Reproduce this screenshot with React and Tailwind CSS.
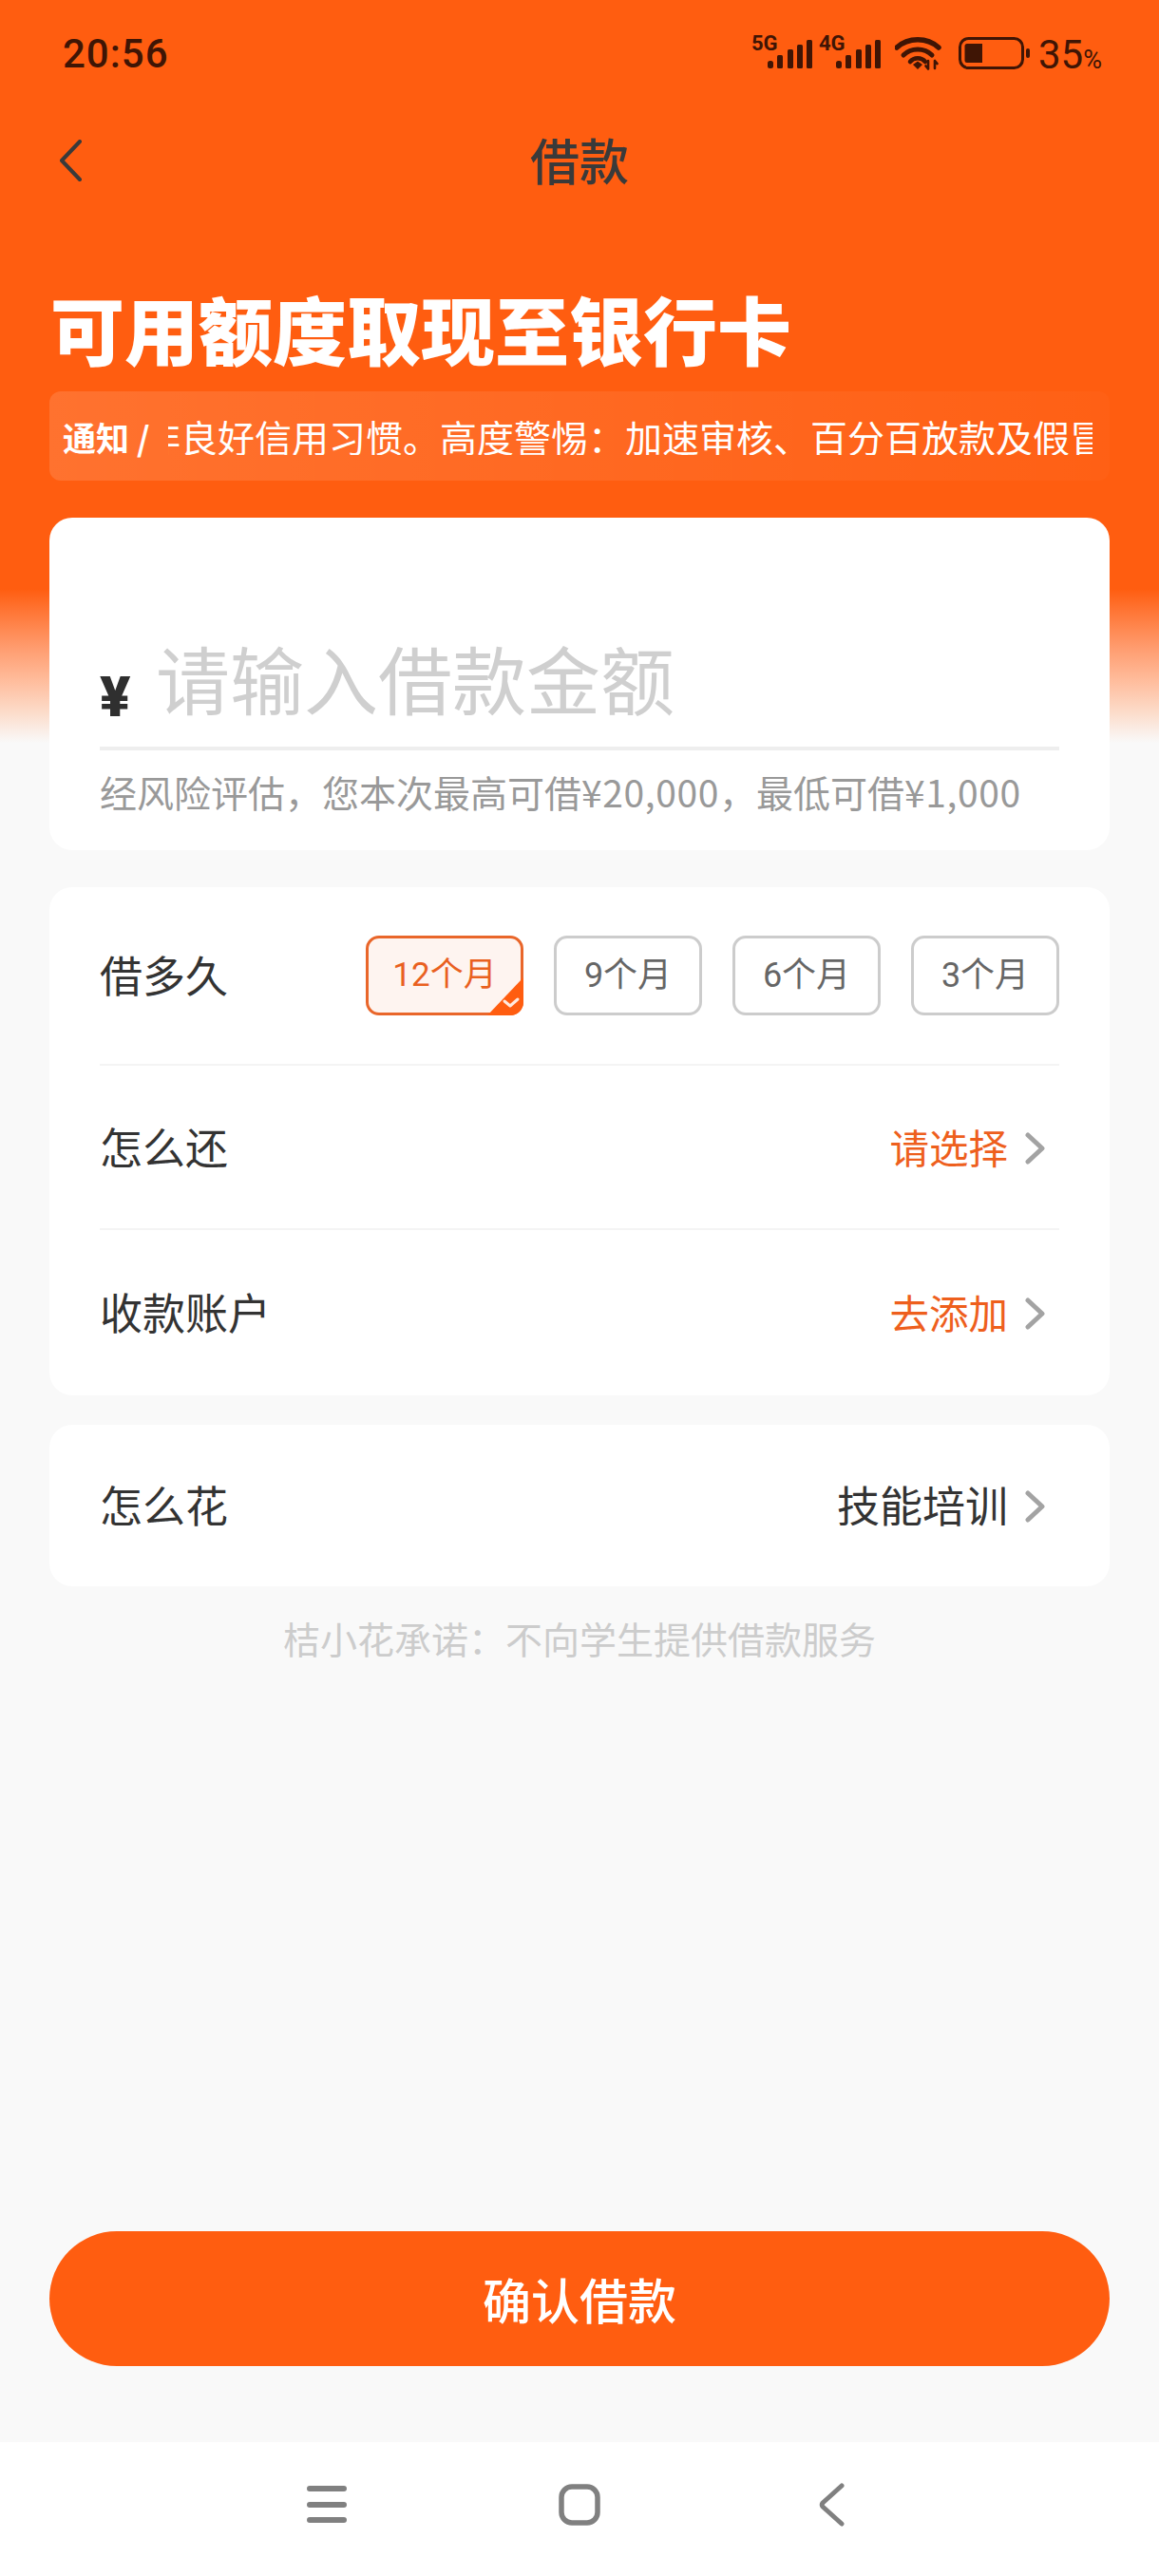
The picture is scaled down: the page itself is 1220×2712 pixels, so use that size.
import React from "react";

const Chevron = () => (
  <svg width="22" height="34" viewBox="0 0 22 34" fill="none" className="shrink-0 mt-[2px]">
    <path d="M3 3 L18 17 L3 31" stroke="#a3a3a3" strokeWidth="5" strokeLinecap="round" strokeLinejoin="round" />
  </svg>
);

const Bars = () => (
  <svg width="48" height="30" viewBox="0 0 48 30" className="block">
    <rect x="0" y="22" width="6" height="8" rx="2.5" fill="#3f1505" />
    <rect x="10" y="16" width="6" height="14" rx="1.5" fill="#3f1505" />
    <rect x="21" y="10" width="6" height="20" rx="1.5" fill="#3f1505" />
    <rect x="31" y="5" width="6" height="25" rx="1.5" fill="#3f1505" />
    <rect x="41" y="0" width="6" height="30" rx="1.5" fill="#3f1505" />
  </svg>
);

const Wifi = () => (
  <svg width="50" height="36" viewBox="0 0 50 36" fill="none" className="block">
    <path d="M2 12 C14 1 34 1 46 12" stroke="#3f1505" strokeWidth="5.5" strokeLinecap="round" />
    <path d="M9 20 C17 12 31 12 39 20" stroke="#3f1505" strokeWidth="5" strokeLinecap="round" />
    <path d="M16 27 C20 22 28 22 32 27" stroke="#3f1505" strokeWidth="4.5" strokeLinecap="round" />
    <path d="M19 30 L24 26.5 L29 30 L24 35 Z" fill="#3f1505" />
    <path d="M35 26 V34 M32.5 31.5 L35 34.5 M42 34 V26 M42 26 L44.5 29" stroke="#3f1505" strokeWidth="2.6" strokeLinecap="round" />
  </svg>
);

const Battery = () => (
  <svg width="76" height="34" viewBox="0 0 76 34" fill="none" className="block">
    <rect x="1.5" y="1.5" width="66" height="31" rx="9" stroke="#3f1505" strokeWidth="3" />
    <path d="M9 7 H25 V27 H9 Q6.5 27 6.5 24.5 V9.5 Q6.5 7 9 7 Z" fill="#3f1505" />
    <rect x="71" y="12" width="4" height="10" rx="2" fill="#3f1505" />
  </svg>
);

const Term = ({ label, active }) => (
  <div
    className={
      active
        ? "relative flex items-center justify-center w-[166px] h-[84px] rounded-[14px] border-[3px] border-[#e9662a] bg-[#fef4f0] text-[#e9601f] text-[35px] font-['Roboto','Noto_Sans_CJK_SC',sans-serif]"
        : "flex items-center justify-center w-[156px] h-[84px] rounded-[14px] border-[3px] border-[#cccccc] bg-white text-[#666666] text-[36px] font-['Roboto','Noto_Sans_CJK_SC',sans-serif]"
    }
  >
    {label}
    {active && (
      <svg width="40" height="40" viewBox="0 0 40 40" className="absolute right-[-3px] bottom-[-3px] rounded-br-[14px]">
        <path d="M40 0 V40 H2 Z" fill="#ff5d10" />
        <path d="M20 25 L26 30 L34 23" fill="none" stroke="#ffe9de" strokeWidth="3" strokeLinecap="round" strokeLinejoin="round" />
      </svg>
    )}
  </div>
);

const Row = ({ label, value, orange, h, line }) => (
  <div className={`${h} flex items-center justify-between ${line ? "border-b-2 border-[#f4f4f4]" : ""}`}>
    <span className="text-[45px] leading-none text-[#333333] mt-[-3px]">{label}</span>
    <span className="flex items-center gap-[18px] pr-[14px]">
      <span className={orange ? "text-[41.5px] leading-none text-[#ee5f1d]" : "text-[45px] leading-none text-[#333333] mt-[-3px]"}>{value}</span>
      <Chevron />
    </span>
  </div>
);

export default function App() {
  return (
    <div className="w-[1220px] h-[2712px] flex flex-col overflow-hidden bg-[#f9f9f9] font-['Noto_Sans_CJK_SC','Noto_Sans',sans-serif] bg-[linear-gradient(180deg,#ff5d10_0px,#ff5d10_620px,#ff7a3c_648px,#ff9a6c_680px,#ffbb9a_715px,#fcdcca_750px,#f9f9f9_782px)]">
      {/* status bar */}
      <div className="h-[112px] shrink-0 flex items-start justify-between pl-[66px] pr-[60px] pt-[33px] text-[#3f1505]">
        <span className="text-[42px] leading-[48px] tracking-[1px] font-medium font-['Roboto',sans-serif]">20:56</span>
        <div className="flex items-start">
          <div className="relative w-[71px] h-[52px]">
            <span className="absolute left-0 top-[3px] text-[22px] leading-[20px] font-bold font-['Roboto',sans-serif]">5G</span>
            <span className="absolute left-[17px] top-[9px]"><Bars /></span>
          </div>
          <div className="relative w-[80px] h-[52px]">
            <span className="absolute left-0 top-[3px] text-[22px] leading-[20px] font-bold font-['Roboto',sans-serif]">4G</span>
            <span className="absolute left-[18px] top-[9px]"><Bars /></span>
          </div>
          <div className="mt-[5px] w-[50px]"><Wifi /></div>
          <div className="mt-[6px] ml-[17px] w-[76px]"><Battery /></div>
          <div className="ml-[8px] mt-[1px] flex items-baseline font-['Roboto',sans-serif]">
            <span className="text-[42px] leading-[48px]">35</span>
            <span className="text-[27px] leading-[48px]">%</span>
          </div>
        </div>
      </div>

      {/* title bar */}
      <div className="h-[114px] shrink-0 flex items-center justify-between pl-[62px] pr-[62px]">
        <svg width="24" height="44" viewBox="0 0 24 44" fill="none">
          <path d="M22 2 L3 22 L22 42" stroke="#3a3a3a" strokeWidth="4" strokeLinecap="round" strokeLinejoin="round" />
        </svg>
        <span className="text-[52px] leading-none font-medium text-[#3a3a3a] mt-[-3px]">借款</span>
        <span className="w-[24px]" />
      </div>

      {/* heading */}
      <h1 className="mt-[77px] pl-[53px] text-[78px] leading-[84px] font-black text-white shrink-0">可用额度取现至银行卡</h1>

      {/* notice */}
      <div className="mx-[52px] mt-[25px] h-[94px] shrink-0 flex items-center rounded-[12px] pl-[14px] pr-[18px] bg-[linear-gradient(90deg,rgba(255,255,255,0.13),rgba(255,255,255,0.02))] text-white text-[39px] leading-none">
        <span className="font-bold text-[35px] whitespace-nowrap shrink-0 w-[111px]">通知 /</span>
        <div className="flex-1 overflow-hidden whitespace-nowrap">
          <span className="block ml-[-26px]">非良好信用习惯。高度警惕：加速审核、百分百放款及假冒</span>
        </div>
      </div>

      {/* amount card */}
      <div className="mx-[52px] mt-[39px] h-[350px] shrink-0 rounded-[24px] bg-white px-[53px] flex flex-col">
        <div className="mt-[130px] h-[115px] shrink-0 flex items-center border-b-[4px] border-[#eeeeee] pb-[36px]">
          <span className="w-[59px] pt-[42px] text-[60px] leading-none font-black text-[#2f2f2f] font-['Roboto',sans-serif]">¥</span>
          <span className="text-[78px] leading-none text-[#cfcfcf]">请输入借款金额</span>
        </div>
        <p className="mt-[20px] text-[39px] leading-[46px] text-[#999999] whitespace-nowrap">
          经风险评估，您本次最高可借<span className="tracking-[0.6px]">¥20,000</span>，最低可借<span className="tracking-[0.6px]">¥1,000</span>
        </p>
      </div>

      {/* options card */}
      <div className="mx-[52px] mt-[39px] h-[535px] shrink-0 rounded-[24px] bg-white px-[53px] flex flex-col">
        <div className="h-[188px] flex items-center justify-between border-b-2 border-[#f4f4f4]">
          <span className="text-[45px] leading-none text-[#333333] mt-[-3px]">借多久</span>
          <div className="flex items-center gap-[32px]">
            <Term label="12个月" active />
            <Term label="9个月" />
            <Term label="6个月" />
            <Term label="3个月" />
          </div>
        </div>
        <Row label="怎么还" value="请选择" orange h="h-[173px]" line />
        <Row label="收款账户" value="去添加" orange h="h-[174px]" />
      </div>

      {/* purpose card */}
      <div className="mx-[52px] mt-[31px] h-[170px] shrink-0 rounded-[24px] bg-white px-[53px] flex flex-col">
        <Row label="怎么花" value="技能培训" h="h-[170px]" />
      </div>

      <p className="mt-[31px] text-center text-[39px] leading-[46px] text-[#cccccc] shrink-0">桔小花承诺：不向学生提供借款服务</p>

      <div className="flex-1" />

      {/* confirm button */}
      <div className="mx-[52px] h-[142px] shrink-0 rounded-full bg-[#ff5d10] flex items-center justify-center text-white text-[51px] font-medium leading-none">确认借款</div>

      {/* nav bar */}
      <div className="mt-[80px] h-[141px] shrink-0 bg-white pt-[43px]">
        <div className="flex items-start pl-[323px]">
          <svg width="43" height="46" viewBox="0 0 43 46" fill="none">
            <path d="M3 6 H39 M3 23 H39 M3 39 H39" stroke="#808080" strokeWidth="6" strokeLinecap="round" />
          </svg>
          <svg width="44" height="44" viewBox="0 0 44 44" fill="none" className="ml-[222px] mt-[1px]">
            <rect x="3" y="3" width="38" height="38" rx="11" stroke="#808080" strokeWidth="5.5" />
          </svg>
          <svg width="28" height="46" viewBox="0 0 28 46" fill="none" className="ml-[229px]">
            <path d="M25 3 L5 21 Q3.5 23 5 25 L25 43" stroke="#808080" strokeWidth="5" strokeLinecap="round" strokeLinejoin="round" />
          </svg>
        </div>
      </div>
    </div>
  );
}
